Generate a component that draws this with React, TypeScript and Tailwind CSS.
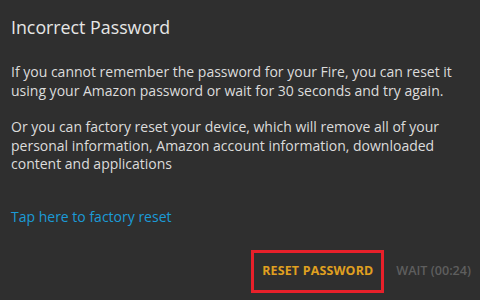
const App = () => {
  const font = { fontFamily: '"Open Sans", "Noto Sans", sans-serif' };

  return (
    <div className="w-[480px] h-[300px] bg-[#2f2f2f] overflow-hidden" style={font}>
      <div className="flex flex-col px-[11px] pt-[15px]">
        <h1 className="text-[17.8px] leading-[24px] text-[#e6e6e6]">Incorrect Password</h1>

        <p className="mt-[24px] text-[14px] leading-[18.5px] text-[#dcdcdc]">
          If you cannot remember the password for your Fire, you can reset it using your Amazon password or wait for 30 seconds and try again.
        </p>

        <p className="mt-[18px] text-[14px] leading-[18.5px] text-[#dcdcdc]">
          Or you can factory reset your device, which will remove all of your personal information, Amazon account information, downloaded content and applications
        </p>

        <a className="mt-[34px] text-[14px] leading-[18.5px] text-[#1b9bd7]">Tap here to factory reset</a>
      </div>

      <div className="flex justify-end items-center mt-[24px] pr-[9px] gap-[12px]">
        <div className="h-[43px] w-[133px] border-[3px] border-[#e8202a] flex items-center justify-center">
          <span className="text-[12.4px] font-bold text-[#e0a020] tracking-[0.2px]">RESET PASSWORD</span>
        </div>
        <span className="text-[12.6px] font-semibold text-[#5e5e5e]">WAIT (00:24)</span>
      </div>
    </div>
  );
};

export default App;
